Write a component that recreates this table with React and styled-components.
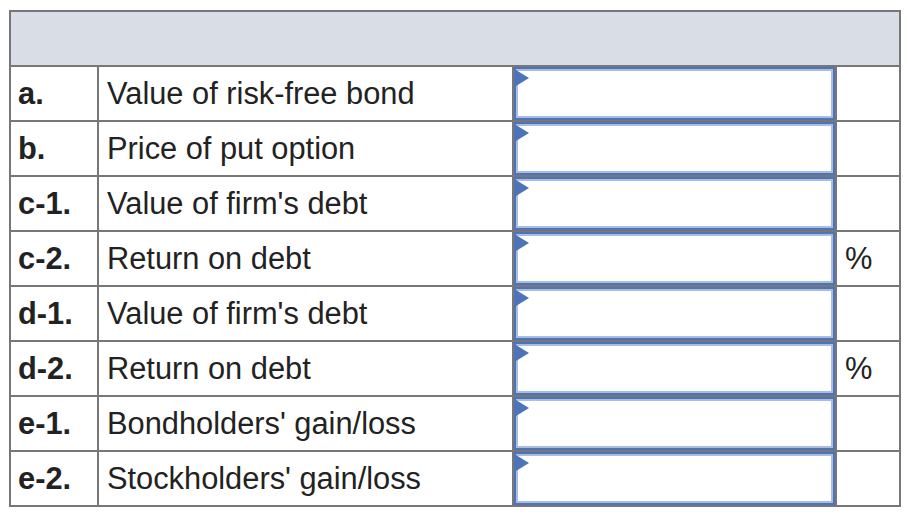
import React from 'react';
import styled, { createGlobalStyle } from 'styled-components';

const rows = [
  { key: 'a.', label: 'Value of risk-free bond', unit: '' },
  { key: 'b.', label: 'Price of put option', unit: '' },
  { key: 'c-1.', label: "Value of firm's debt", unit: '' },
  { key: 'c-2.', label: 'Return on debt', unit: '%' },
  { key: 'd-1.', label: "Value of firm's debt", unit: '' },
  { key: 'd-2.', label: 'Return on debt', unit: '%' },
  { key: 'e-1.', label: "Bondholders' gain/loss", unit: '' },
  { key: 'e-2.', label: "Stockholders' gain/loss", unit: '' },
];

const GlobalStyle = createGlobalStyle`
  body {
    margin: 0;
    background: #fff;
    font-family: "Liberation Sans", Arial, sans-serif;
  }
`;

const Page = styled.div`
  padding: 10px 0 0 9px;
`;

const Table = styled.table`
  border-collapse: collapse;
  table-layout: fixed;
  width: 890px;
  color: #222;
  font-size: 30.8px;
  td, th {
    border: 2px solid #777;
    padding: 0;
  }
`;

const Col = styled.col`
  width: ${(p) => p.$w}px;
`;

const HeadCell = styled.th`
  height: 53px;
  background: #d9dde6;
`;

const Row = styled.tr`
  height: 55px;
`;

const KeyCell = styled.td`
  font-weight: bold;
  padding-left: 7px !important;
`;

const LabelCell = styled.td`
  padding-left: 8px !important;
  white-space: nowrap;
`;

const InputCell = styled.td`
  vertical-align: top;
`;

const Field = styled.div`
  position: relative;
  height: 53px;
  box-sizing: border-box;
  border: 2px solid #4d73b9;
  box-shadow: inset 0 0 0 2px #a9bde3;
  background: #fff;
  &::before {
    content: '';
    position: absolute;
    left: 0;
    top: 1px;
    border-top: 8px solid transparent;
    border-bottom: 8px solid transparent;
    border-left: 13px solid #4d73b9;
  }
`;

const UnitCell = styled.td`
  padding-left: 8px !important;
`;

export default function App() {
  return (
    <Page>
      <GlobalStyle />
      <Table>
        <colgroup>
          <Col $w={88} />
          <Col $w={415} />
          <Col $w={323} />
          <Col $w={64} />
        </colgroup>
        <thead>
          <tr>
            <HeadCell colSpan={4} />
          </tr>
        </thead>
        <tbody>
          {rows.map((r, i) => (
            <Row key={i}>
              <KeyCell>{r.key}</KeyCell>
              <LabelCell>{r.label}</LabelCell>
              <InputCell>
                <Field />
              </InputCell>
              <UnitCell>{r.unit}</UnitCell>
            </Row>
          ))}
        </tbody>
      </Table>
    </Page>
  );
}
